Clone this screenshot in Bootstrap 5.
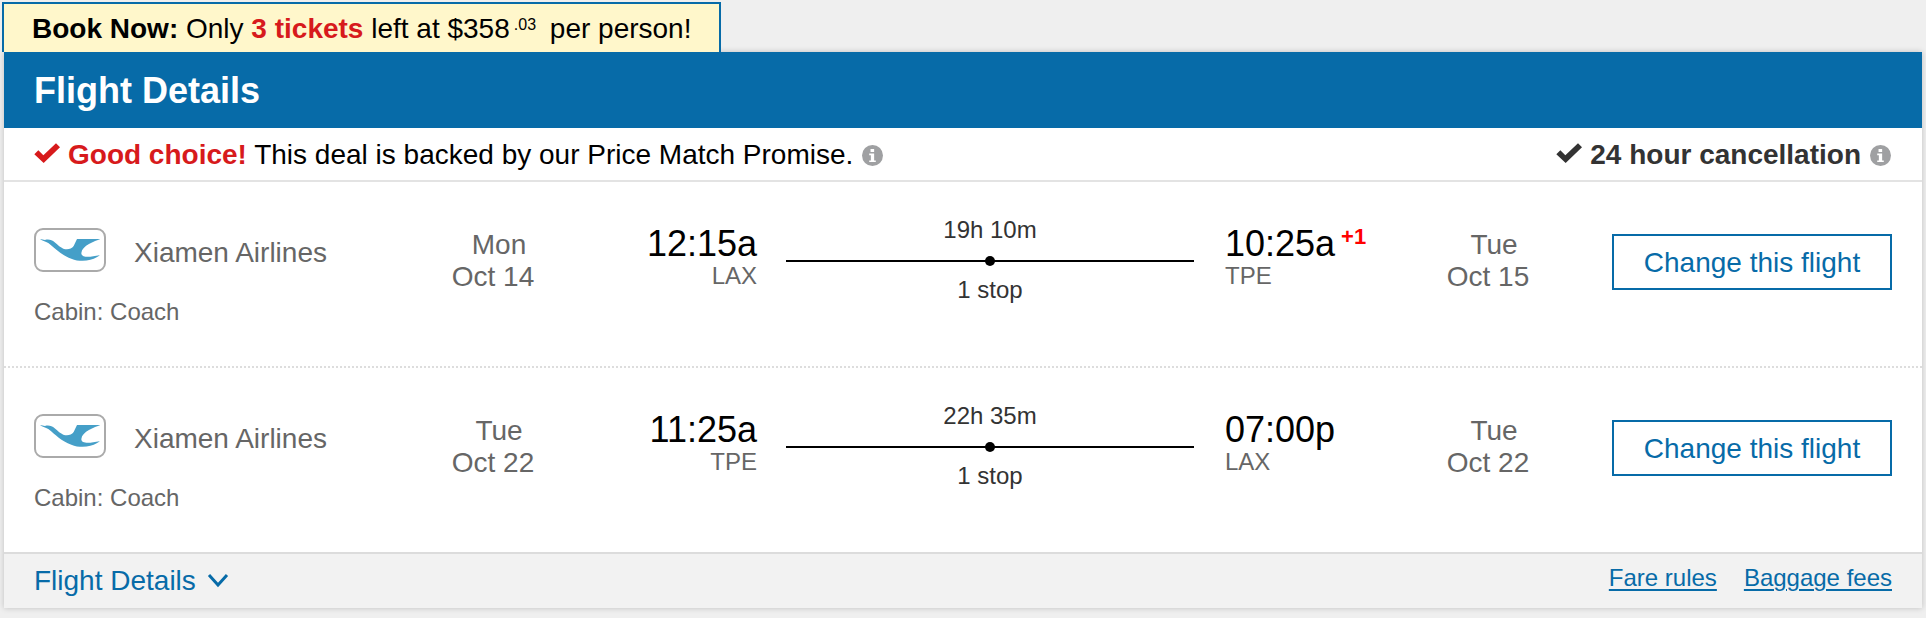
<!DOCTYPE html>
<html lang="en">
<head>
<meta charset="utf-8">
<meta name="viewport" content="width=device-width, initial-scale=1">
<title>Flight Details</title>
<link rel="stylesheet" href="https://cdn.jsdelivr.net/npm/bootstrap@5.3.0/dist/css/bootstrap.min.css">
<style>
  :root { --brand: #076ba8; --alert: #d71a1c; --muted: #666; }
  body { background: #efefef; color: #000; font: 28px/32px "Liberation Sans", Arial, sans-serif; padding: 2px 4px 10px 2px; }
  .urgency { background: #fff7cb; border: 2px solid var(--brand); border-bottom: 0; padding: 9px 28px 7px; }
  .urgency sup { font-size: 16px; line-height: 1; top: -8px; margin: 0 6px 0 4px; vertical-align: baseline; }
  .text-alert { color: var(--alert); }
  .text-soft { color: var(--muted); }
  .text-dim { color: #333; }
  .itinerary { background: #fff; margin-left: 2px; box-shadow: 0 0 6px rgba(0,0,0,.2); }
  .itinerary-head { background: var(--brand); color: #fff; padding: 19px 30px 17px; }
  .itinerary-head h2 { font-size: 36px; line-height: 40px; font-weight: 700; }
  .promise { padding: 11px 30px 9px; border-bottom: 2px solid #e3e3e3; }
  .info-btn { border: 0; padding: 0; background: none; margin: 0 1px 0 9px; }
  .leg { display: grid; grid-template-columns: 392fr 134fr 197fr 468fr 195fr 136fr 336fr; padding: 34px 30px 40px; border-bottom: 2px dotted #ddd; }
  .leg:last-of-type { border-bottom: 2px solid #dcdcdc; }
  .fs-note { font-size: 24px; line-height: 28px; }
  .carrier { padding-top: 12px; }
  .carrier-name { margin-left: 28px; padding-top: 6px; }
  .cabin { margin-top: 26px; }
  .leg-date { padding-top: 13px; }
  .leg-day { padding-left: 12px; }
  .leg-point { padding-top: 10px; }
  .leg-time { font-size: 36px; line-height: 36px; }
  .next-day { color: #f00; font-size: 22px; font-weight: 700; line-height: 22px; margin-left: 6px; }
  .leg-path { padding: 0 31px 0 29px; }
  .track { height: 2px; background: #000; margin: 16px 0 14px; }
  .track-stop { width: 10px; height: 10px; border-radius: 50%; background: #000; flex: none; }
  .leg-action { padding-top: 18px; }
  .btn-change { --bs-btn-color: var(--brand); --bs-btn-border-color: var(--brand); --bs-btn-bg: #fff; --bs-btn-hover-color: #fff; --bs-btn-hover-bg: var(--brand);
    font-size: 28px; line-height: 32px; padding: 11px 0 9px; width: 280px; border-width: 2px; border-radius: 0; }
  .itinerary-foot { background: #f2f2f2; padding: 10px 30px; }
  .toggle-btn { border: 0; padding: 1px 0; background: none; color: var(--brand); }
  .foot-links { gap: 27px; }
  .foot-links a { color: var(--brand); text-decoration-thickness: 2px; text-underline-offset: 3px; text-decoration-skip-ink: auto; }
</style>
</head>
<body>
<svg class="d-none" xmlns="http://www.w3.org/2000/svg">
  <symbol id="check" viewBox="0 0 78 60"><path fill="currentColor" d="M1 34 13 22 28 37 66 1 78 13 29 60Z"/></symbol>
  <symbol id="info" viewBox="0 0 64 64"><circle cx="32" cy="32" r="32" fill="#9fa0a2"/><path fill="#fff" d="M26 12h11v9H26zM22 26h15v21h5v5H22v-5h5V31h-5z"/></symbol>
  <symbol id="carrier-logo" viewBox="42 24 216 132">
    <rect x="45" y="27" width="210" height="126" rx="24" fill="#fff" stroke="#aaa" stroke-width="6"/>
    <path fill="#459fc8" d="M60 57C66 58 70 59 75 60 86 57 96 60 104 67 114 76 122 83 130 86 141 90 154 88 161 78 165 71 167 64 171 57H241C224 64 186 76 184 99 184 114 208 112 239 106 236 109 234 110 230 112 212 123 180 127 154 116 124 106 106 86 86 70 80 65 66 62 60 57Z"/>
  </symbol>
</svg>

<div class="d-flex">
  <div class="urgency"><strong>Book Now:</strong> Only <strong class="text-alert">3 tickets</strong> left at $358<sup>.03</sup> per person!</div>
</div>

<main class="itinerary">
  <header class="itinerary-head"><h2 class="m-0">Flight Details</h2></header>

  <div class="promise d-flex justify-content-between">
    <div class="d-flex align-items-center">
      <svg class="text-alert me-2 mb-1" width="26" height="20" aria-hidden="true"><use href="#check"/></svg>
      <span><strong class="text-alert">Good choice!</strong> This deal is backed by our Price Match Promise.</span>
      <button class="info-btn d-flex" type="button" aria-label="About the Price Match Promise"><svg width="21" height="21"><use href="#info"/></svg></button>
    </div>
    <div class="d-flex align-items-center text-dim">
      <svg class="me-2 mb-1" width="26" height="20" aria-hidden="true"><use href="#check"/></svg>
      <strong>24 hour cancellation</strong>
      <button class="info-btn d-flex" type="button" aria-label="About cancellation"><svg width="21" height="21"><use href="#info"/></svg></button>
    </div>
  </div>

  <section class="leg">
    <div class="carrier text-soft">
      <div class="d-flex align-items-center">
        <svg width="72" height="44" role="img" aria-label="Xiamen Airlines"><use href="#carrier-logo"/></svg>
        <span class="carrier-name">Xiamen Airlines</span>
      </div>
      <div class="cabin fs-note">Cabin: Coach</div>
    </div>
    <div class="leg-date text-soft text-center"><div class="leg-day">Mon</div>Oct 14</div>
    <div class="leg-point text-end">
      <div class="leg-time">12:15a</div>
      <div class="fs-note text-soft">LAX</div>
    </div>
    <div class="leg-path fs-note text-dim text-center">
      <div>19h 10m</div>
      <div class="track d-flex align-items-center justify-content-center"><span class="track-stop"></span></div>
      <div>1 stop</div>
    </div>
    <div class="leg-point">
      <div class="leg-time d-flex">10:25a<span class="next-day">+1</span></div>
      <div class="fs-note text-soft">TPE</div>
    </div>
    <div class="leg-date text-soft text-center"><div class="leg-day">Tue</div>Oct 15</div>
    <div class="leg-action text-end"><button class="btn btn-change" type="button">Change this flight</button></div>
  </section>

  <section class="leg">
    <div class="carrier text-soft">
      <div class="d-flex align-items-center">
        <svg width="72" height="44" role="img" aria-label="Xiamen Airlines"><use href="#carrier-logo"/></svg>
        <span class="carrier-name">Xiamen Airlines</span>
      </div>
      <div class="cabin fs-note">Cabin: Coach</div>
    </div>
    <div class="leg-date text-soft text-center"><div class="leg-day">Tue</div>Oct 22</div>
    <div class="leg-point text-end">
      <div class="leg-time">11:25a</div>
      <div class="fs-note text-soft">TPE</div>
    </div>
    <div class="leg-path fs-note text-dim text-center">
      <div>22h 35m</div>
      <div class="track d-flex align-items-center justify-content-center"><span class="track-stop"></span></div>
      <div>1 stop</div>
    </div>
    <div class="leg-point">
      <div class="leg-time">07:00p</div>
      <div class="fs-note text-soft">LAX</div>
    </div>
    <div class="leg-date text-soft text-center"><div class="leg-day">Tue</div>Oct 22</div>
    <div class="leg-action text-end"><button class="btn btn-change" type="button">Change this flight</button></div>
  </section>

  <footer class="itinerary-foot d-flex justify-content-between align-items-start">
    <button class="toggle-btn d-flex align-items-center" type="button">Flight Details
      <svg class="ms-2" width="32" height="20" viewBox="0 0 32 20" fill="none" stroke="currentColor" stroke-width="3" aria-hidden="true"><path d="M5 4 14 14 23 4"/></svg>
    </button>
    <nav class="foot-links d-flex fs-note"><a href="#fare-rules">Fare rules</a><a href="#baggage-fees">Baggage fees</a></nav>
  </footer>
</main>
<script src="https://cdn.jsdelivr.net/npm/bootstrap@5.3.0/dist/js/bootstrap.bundle.min.js"></script>
</body>
</html>
